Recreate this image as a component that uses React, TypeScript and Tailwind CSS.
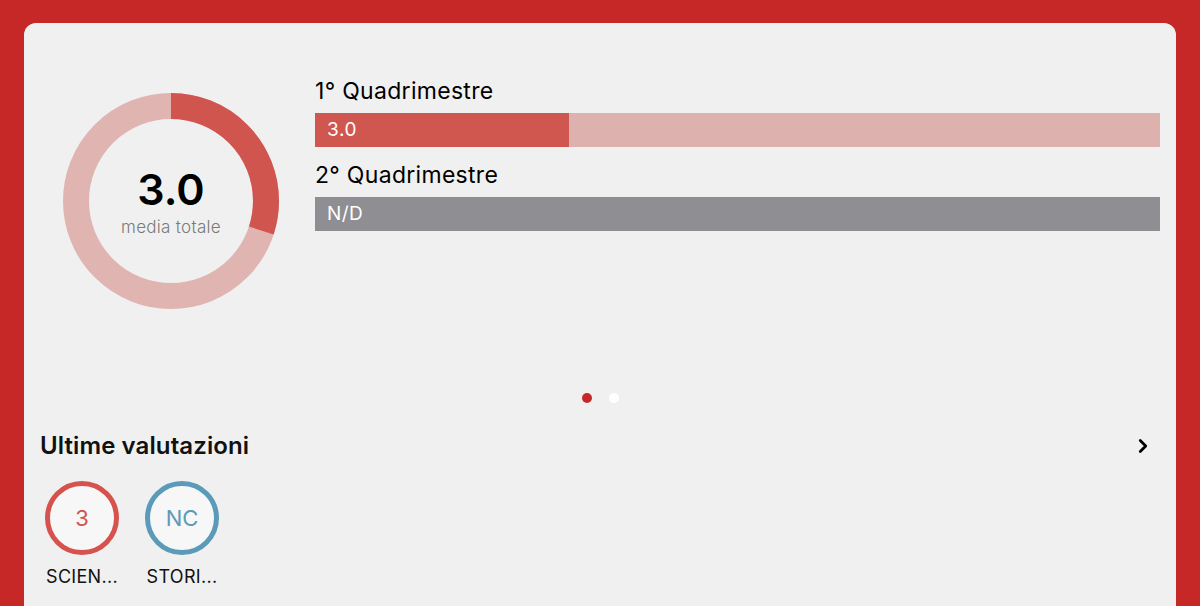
import { ChevronRight } from 'lucide-react'

type Period = { label: string; value: number | null }

const periods: Period[] = [
  { label: '1° Quadrimestre', value: 3.0 },
  { label: '2° Quadrimestre', value: null },
]

const grades = [
  { mark: '3', subject: 'SCIEN...', ring: 'border-[#d6524d]', text: 'text-[#d6524d]' },
  { mark: 'NC', subject: 'STORI...', ring: 'border-[#5b9ab8]', text: 'text-[#5b9ab8]' },
]

function Donut({ value }: { value: number }) {
  const r = 95
  const c = 2 * Math.PI * r
  const filled = (value / 10) * c
  return (
    <div className="relative h-[216px] w-[216px]">
      <svg width="216" height="216" viewBox="0 0 216 216" className="-rotate-90">
        <circle cx="108" cy="108" r={r} fill="none" stroke="#dfb4b1" strokeWidth="26" />
        <circle
          cx="108"
          cy="108"
          r={r}
          fill="none"
          stroke="#d0554f"
          strokeWidth="26"
          strokeDasharray={`${filled} ${c}`}
        />
      </svg>
      <div className="absolute inset-0 flex flex-col items-center justify-center">
        <span className="text-[43px] font-semibold leading-[48px] text-black">{value.toFixed(1)}</span>
        <span className="mt-[4px] text-[17px] font-light leading-5 tracking-[0.3px] text-[#7a7a7a]">
          media totale
        </span>
      </div>
    </div>
  )
}

function PeriodBar({ period }: { period: Period }) {
  const pct = period.value === null ? 0 : (period.value / 10) * 100
  return (
    <div>
      <div className="mb-2 text-[23px] leading-[28px] tracking-[0.3px] text-black">{period.label}</div>
      {period.value === null ? (
        <div className="flex h-[34px] items-center bg-[#8e8e93] px-3 text-[19px] tracking-[0.4px] text-white">
          N/D
        </div>
      ) : (
        <div className="relative h-[34px] bg-[#ddb2ae]">
          <div className="h-full bg-[#d0574f]" style={{ width: `${pct}%` }} />
          <span className="absolute inset-y-0 left-3 flex items-center text-[19px] tracking-[0.6px] text-white">
            {period.value.toFixed(1)}
          </span>
        </div>
      )}
    </div>
  )
}

export default function App() {
  return (
    <div
      className="h-[606px] w-[1200px] overflow-hidden bg-[#c62828] px-6 pt-[23px]"
      style={{ fontFamily: 'Inter, "Noto Sans", sans-serif' }}
    >
      <div className="h-[700px] rounded-[12px] bg-[#f0f0f0] px-4">
        <div className="flex h-[370px] gap-[13px]">
          <div className="flex w-[262px] justify-center pt-[70px]">
            <Donut value={3.0} />
          </div>
          <div className="flex flex-1 flex-col gap-[14px] pt-[54px]">
            {periods.map((p) => (
              <PeriodBar key={p.label} period={p} />
            ))}
          </div>
        </div>

        <div className="flex justify-center gap-[17px]">
          <span className="h-[10px] w-[10px] rounded-full bg-[#c62828]" />
          <span className="h-[10px] w-[10px] rounded-full bg-white" />
        </div>

        <div className="mt-[29px] flex h-[28px] items-center justify-between">
          <span className="text-[24px] font-semibold tracking-[0.1px] text-[#111]">Ultime valutazioni</span>
          <ChevronRight className="mr-[6px] h-[22px] w-[22px] text-black" strokeWidth={3} />
        </div>

        <div className="mt-[21px] flex gap-[16px]">
          {grades.map((g) => (
            <div key={g.subject} className="flex w-[84px] flex-col items-center">
              <div
                className={`flex h-[74px] w-[74px] items-center justify-center rounded-full border-[5px] bg-[#f7f7f7] ${g.ring}`}
              >
                <span className={`text-[22px] ${g.text}`}>{g.mark}</span>
              </div>
              <span className="mt-[12px] text-[18px] leading-5 tracking-[0.3px] text-[#111]">{g.subject}</span>
            </div>
          ))}
        </div>
      </div>
    </div>
  )
}
